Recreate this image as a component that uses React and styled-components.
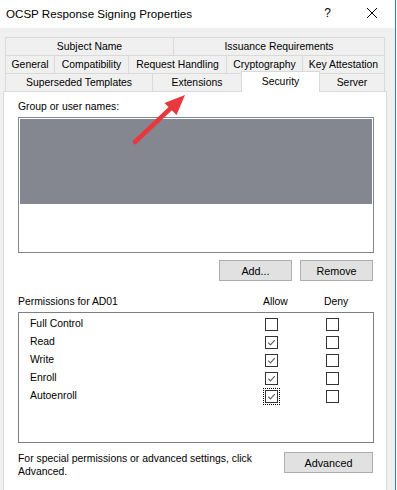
import React from "react";
import styled, { createGlobalStyle } from "styled-components";

const GlobalStyle = createGlobalStyle`
  html, body {
    margin: 0;
    padding: 0;
    background: #ffffff;
  }
  body {
    width: 397px;
    height: 490px;
    overflow: hidden;
    font-family: "Liberation Sans", Arial, sans-serif;
    font-size: 10.4px;
    color: #000;
  }
`;

const tabRows = [
  [
    { label: "Subject Name", width: 169 },
    { label: "Issuance Requirements", width: 212 },
  ],
  [
    { label: "General", width: 50 },
    { label: "Compatibility", width: 75 },
    { label: "Request Handling", width: 99 },
    { label: "Cryptography", width: 77 },
    { label: "Key Attestation", width: 83 },
  ],
  [
    { label: "Superseded Templates", width: 148 },
    { label: "Extensions", width: 90 },
    { label: "Security", width: 79, selected: true },
    { label: "Server", width: 66 },
  ],
];

const permissions = [
  { name: "Full Control", allow: false, deny: false },
  { name: "Read", allow: true, deny: false },
  { name: "Write", allow: true, deny: false },
  { name: "Enroll", allow: true, deny: false },
  { name: "Autoenroll", allow: true, deny: false, focused: true },
];

const CheckBox = ({ checked, focused }) => (
  <Box $focused={focused}>
    {checked && (
      <svg width="11" height="11" viewBox="0 0 11 11">
        <path d="M2.2 5.6 L4.4 7.8 L8.8 3.2" fill="none" stroke="#606060" strokeWidth="1.2" />
      </svg>
    )}
  </Box>
);

const App = () => {
  return (
    <>
      <GlobalStyle />
      <Screen>
        <Dialog>
          <TitleBar>
            <Title>OCSP Response Signing Properties</Title>
            <HelpGlyph>?</HelpGlyph>
            <CloseIcon width="12" height="12" viewBox="0 0 12 12">
              <path d="M1 1 L11 11 M11 1 L1 11" stroke="#000" strokeWidth="1" />
            </CloseIcon>
          </TitleBar>
          <Body>
            <TabStrip>
              {tabRows.map((row, i) => (
                <TabRow key={i}>
                  {row.map((tab) => (
                    <Tab key={tab.label} $width={tab.width} $selected={tab.selected}>
                      {tab.label}
                    </Tab>
                  ))}
                </TabRow>
              ))}
            </TabStrip>
            <Panel>
              <Label>Group or user names:</Label>
              <NamesList>
                <Redacted />
              </NamesList>
              <ButtonRow>
                <Button $width={73}>Add...</Button>
                <Button $width={73}>Remove</Button>
              </ButtonRow>
              <PermHeader>
                <span>Permissions for AD01</span>
                <span>Allow</span>
                <span>Deny</span>
              </PermHeader>
              <PermList>
                {permissions.map((p) => (
                  <PermRow key={p.name}>
                    <span>{p.name}</span>
                    <CheckBox checked={p.allow} focused={p.focused} />
                    <CheckBox checked={p.deny} />
                  </PermRow>
                ))}
              </PermList>
              <Footer>
                <FooterText>
                  For special permissions or advanced settings, click
                  <br />
                  Advanced.
                </FooterText>
                <Button $width={89} $height={21}>Advanced</Button>
              </Footer>
            </Panel>
          </Body>
        </Dialog>
        <WindowEdge />
        <Arrow width="80" height="70" viewBox="0 0 80 70">
          <line x1="15" y1="62" x2="52" y2="27" stroke="#e8383d" strokeWidth="4.5" strokeLinecap="round" />
          <polygon points="65,15 56.5,35 44.5,23" fill="#e8383d" />
        </Arrow>
      </Screen>
    </>
  );
};
export default App;

const Screen = styled.div`
  position: relative;
  display: flex;
  width: 397px;
  height: 490px;
  overflow: hidden;
`;

const Dialog = styled.div`
  display: flex;
  flex-direction: column;
  width: 395px;
  height: 490px;
`;

const WindowEdge = styled.div`
  width: 1px;
  background: #1883d7;
`;

const TitleBar = styled.div`
  display: flex;
  align-items: center;
  height: 28px;
  flex-shrink: 0;
  background: #ffffff;
  padding-left: 6px;
  box-sizing: border-box;
`;

const Title = styled.div`
  font-size: 11.6px;
  flex: 1;
  padding-bottom: 1px;
`;

const HelpGlyph = styled.div`
  font-size: 12px;
  margin-right: 35px;
  padding-bottom: 2px;
`;

const CloseIcon = styled.svg`
  margin-right: 17px;
  margin-bottom: 2px;
`;

const Body = styled.div`
  flex: 1;
  background: #f0f0f0;
  padding: 9px 0 0 3px;
  overflow: hidden;
`;

const TabStrip = styled.div`
  display: flex;
  flex-direction: column;
  margin-left: 2px;
`;

const TabRow = styled.div`
  display: flex;
  height: 18px;
`;

const Tab = styled.div`
  box-sizing: border-box;
  width: ${(p) => p.$width}px;
  height: ${(p) => (p.$selected ? 21 : 18)}px;
  margin-top: ${(p) => (p.$selected ? -2 : 0)}px;
  margin-bottom: ${(p) => (p.$selected ? -1 : 0)}px;
  padding-bottom: ${(p) => (p.$selected ? 2 : 0)}px;
  border: 1px solid #d9d9d9;
  border-bottom: none;
  background: ${(p) => (p.$selected ? "#ffffff" : "#f0f0f0")};
  position: relative;
  z-index: ${(p) => (p.$selected ? 2 : 0)};
  display: flex;
  align-items: center;
  justify-content: center;
  white-space: nowrap;
  & + & {
    margin-left: -1px;
  }
`;

const Panel = styled.div`
  width: 384px;
  box-sizing: border-box;
  background: #ffffff;
  border: 1px solid #d9d9d9;
  padding: 9px 12px 40px 14px;
`;

const Label = styled.div`
  line-height: 12px;
  margin-bottom: 4px;
`;

const NamesList = styled.div`
  box-sizing: border-box;
  height: 136px;
  border: 1px solid #828790;
  padding: 1px 1px 0 1px;
  background: #ffffff;
`;

const Redacted = styled.div`
  height: 85px;
  background: #84878f;
`;

const ButtonRow = styled.div`
  display: flex;
  justify-content: flex-end;
  gap: 8px;
  margin: 7px 1px 0 0;
`;

const Button = styled.div`
  box-sizing: border-box;
  width: ${(p) => p.$width}px;
  height: ${(p) => p.$height || 21}px;
  background: #e1e1e1;
  border: 1px solid #adadad;
  display: flex;
  align-items: center;
  justify-content: center;
  font-size: 10.8px;
`;

const PermHeader = styled.div`
  display: grid;
  grid-template-columns: 245px 61px 1fr;
  line-height: 12px;
  margin-top: 15px;
  margin-bottom: 4px;
`;

const PermList = styled.div`
  box-sizing: border-box;
  height: 131px;
  border: 1px solid #7f7f7f;
  padding: 2px 0 0 11px;
`;

const PermRow = styled.div`
  display: grid;
  grid-template-columns: 235px 61px 1fr;
  align-items: center;
  height: 18px;
  line-height: 12px;
`;

const Box = styled.div`
  box-sizing: border-box;
  width: 13px;
  height: 13px;
  margin-top: 1px;
  border: 1px solid #333333;
  background: #ffffff;
  display: flex;
  align-items: center;
  justify-content: center;
  outline: ${(p) => (p.$focused ? "1px dotted #000" : "none")};
  outline-offset: 1px;
`;

const Footer = styled.div`
  display: flex;
  justify-content: space-between;
  align-items: flex-start;
  margin-top: 9px;
  padding-right: 1px;
`;

const FooterText = styled.div`
  line-height: 13px;
`;

const Arrow = styled.svg`
  position: absolute;
  left: 120px;
  top: 80px;
  z-index: 5;
`;
